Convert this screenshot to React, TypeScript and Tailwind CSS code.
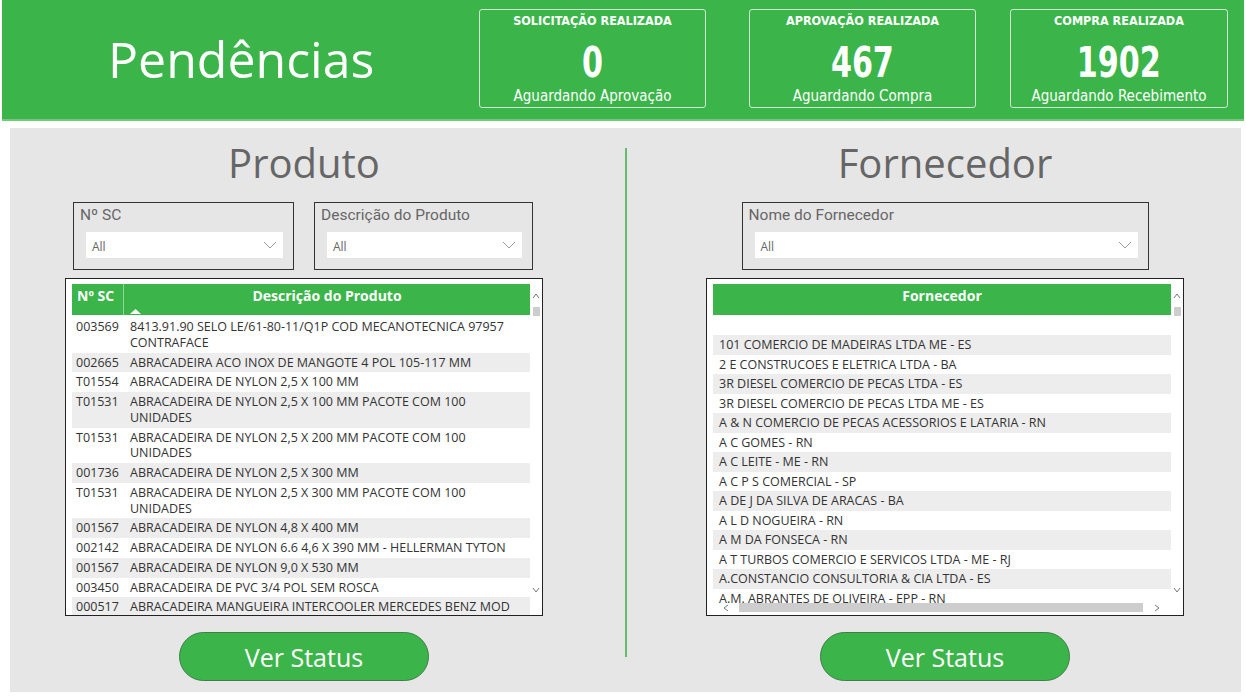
import React from 'react';

const kpis = [
  { title: 'SOLICITAÇÃO REALIZADA', value: '0', sub: 'Aguardando Aprovação', w: 'w-[227px]', ml: 'ml-0' },
  { title: 'APROVAÇÃO REALIZADA', value: '467', sub: 'Aguardando Compra', w: 'w-[227px]', ml: 'ml-[43px]' },
  { title: 'COMPRA REALIZADA', value: '1902', sub: 'Aguardando Recebimento', w: 'w-[218px]', ml: 'ml-[34px]' },
];

const produtos: { sc: string; desc: string[] }[] = [
  { sc: '003569', desc: ['8413.91.90 SELO LE/61-80-11/Q1P COD MECANOTECNICA 97957', 'CONTRAFACE'] },
  { sc: '002665', desc: ['ABRACADEIRA ACO INOX DE MANGOTE 4 POL 105-117 MM'] },
  { sc: 'T01554', desc: ['ABRACADEIRA DE NYLON 2,5 X 100 MM'] },
  { sc: 'T01531', desc: ['ABRACADEIRA DE NYLON 2,5 X 100 MM PACOTE COM 100', 'UNIDADES'] },
  { sc: 'T01531', desc: ['ABRACADEIRA DE NYLON 2,5 X 200 MM PACOTE COM 100', 'UNIDADES'] },
  { sc: '001736', desc: ['ABRACADEIRA DE NYLON 2,5 X 300 MM'] },
  { sc: 'T01531', desc: ['ABRACADEIRA DE NYLON 2,5 X 300 MM PACOTE COM 100', 'UNIDADES'] },
  { sc: '001567', desc: ['ABRACADEIRA DE NYLON 4,8 X 400 MM'] },
  { sc: '002142', desc: ['ABRACADEIRA DE NYLON 6.6 4,6 X 390 MM - HELLERMAN TYTON'] },
  { sc: '001567', desc: ['ABRACADEIRA DE NYLON 9,0 X 530 MM'] },
  { sc: '003450', desc: ['ABRACADEIRA DE PVC 3/4 POL SEM ROSCA'] },
  { sc: '000517', desc: ['ABRACADEIRA MANGUEIRA INTERCOOLER MERCEDES BENZ MOD'] },
];

const fornecedores = [
  '101 COMERCIO DE MADEIRAS LTDA ME - ES',
  '2 E CONSTRUCOES E ELETRICA LTDA - BA',
  '3R DIESEL COMERCIO DE PECAS LTDA - ES',
  '3R DIESEL COMERCIO DE PECAS LTDA ME - ES',
  'A & N COMERCIO DE PECAS ACESSORIOS E LATARIA - RN',
  'A C GOMES - RN',
  'A C LEITE - ME - RN',
  'A C P S COMERCIAL - SP',
  'A DE J DA SILVA DE ARACAS - BA',
  'A L D NOGUEIRA - RN',
  'A M DA FONSECA - RN',
  'A T TURBOS COMERCIO E SERVICOS LTDA - ME - RJ',
  'A.CONSTANCIO CONSULTORIA & CIA LTDA - ES',
  'A.M. ABRANTES DE OLIVEIRA - EPP - RN',
];

const Chevron = () => (
  <svg width="14" height="8" viewBox="0 0 14 8" fill="none">
    <polyline points="1,1 7,7 13,1" stroke="#9a9a9a" strokeWidth="1" />
  </svg>
);

const TinyArrow = ({ dir }: { dir: 'up' | 'down' | 'left' | 'right' }) => {
  const pts = {
    up: '1,5 4,1 7,5',
    down: '1,1 4,5 7,1',
    left: '5,1 1,4 5,7',
    right: '1,1 5,4 1,7',
  }[dir];
  const wide = dir === 'up' || dir === 'down';
  return (
    <svg width={wide ? 8 : 6} height={wide ? 6 : 8} viewBox={wide ? '0 0 8 6' : '0 0 6 8'} fill="none">
      <polyline points={pts} stroke="#777" strokeWidth="1" />
    </svg>
  );
};

const Slicer = ({ label, width }: { label: string; width: string }) => (
  <div className={`${width} h-[68px] border border-[#333] flex flex-col`}>
    <div className="pl-[6px] pt-[2px] h-[28px] text-[15.5px] leading-[20px] text-[#666] font-['Roboto',sans-serif]">
      {label}
    </div>
    <div className="ml-[12px] mr-[10px] mt-[1px] h-[26px] bg-white flex items-center justify-between pl-[6px] pr-[6px]">
      <span className="text-[12px] text-[#666] font-['Open_Sans',sans-serif] pt-[3px]">All</span>
      <Chevron />
    </div>
  </div>
);

const VScroll = () => (
  <div className="w-[12px] flex flex-col items-center">
    <div className="mt-[9px]"><TinyArrow dir="up" /></div>
    <div className="mt-[8px] w-[7px] h-[9px] bg-[#cdcdcd]" />
    <div className="flex-1" />
    <div className="mb-[22px]"><TinyArrow dir="down" /></div>
  </div>
);

const VerStatus = () => (
  <button className="w-[250px] h-[49px] rounded-full bg-[#3bb54a] border border-[#3f7d47] text-white text-[25px] leading-[30px] font-['Open_Sans',sans-serif] self-center">
    Ver Status
  </button>
);

const ProdutoTable = () => (
  <div className="w-[478px] h-[338px] border border-[#222] bg-white pl-[6px] pt-[5px] flex">
    <div className="flex-1 flex flex-col overflow-hidden">
      <div className="h-[31px] shrink-0 bg-[#3bb54a] flex text-white font-bold text-[14px] font-['Open_Sans',sans-serif]">
        <div className="w-[52px] border-r border-[#8fd497] pl-[5px] pt-[3px] leading-[18px]">Nº SC</div>
        <div className="flex-1 flex flex-col">
          <div className="text-center pt-[3px] leading-[18px]">Descrição do Produto</div>
          <svg className="ml-[6px] mt-[4px]" width="11" height="5" viewBox="0 0 11 5">
            <polygon points="0,5 5.5,0 11,5" fill="#fff" />
          </svg>
        </div>
      </div>
      <div className="flex-1 overflow-hidden pt-[2px] text-[12.5px] text-[#333] font-['Open_Sans',sans-serif]">
        {produtos.map((p, i) => (
          <div
            key={i}
            className={`flex py-[2px] leading-[15.75px] ${i % 2 === 0 ? 'bg-white' : 'bg-[#ededed]'}`}
          >
            <div className="w-[52px] pl-[4px] whitespace-nowrap">{p.sc}</div>
            <div className="flex-1 pl-[6px] whitespace-nowrap">
              {p.desc.map((l, j) => (
                <div key={j}>{l}</div>
              ))}
            </div>
          </div>
        ))}
      </div>
    </div>
    <VScroll />
  </div>
);

const FornecedorTable = () => (
  <div className="w-[478px] h-[338px] border border-[#222] bg-white pl-[6px] pt-[5px] flex">
    <div className="flex-1 flex flex-col overflow-hidden relative">
      <div className="h-[31px] shrink-0 bg-[#3bb54a] text-white font-bold text-[14px] font-['Open_Sans',sans-serif] text-center pt-[3px] leading-[18px]">
        Fornecedor
      </div>
      <div className="flex-1 overflow-hidden text-[12.5px] text-[#333] font-['Open_Sans',sans-serif]">
        <div className="h-[20px] bg-white" />
        {fornecedores.map((f, i) => (
          <div
            key={i}
            className={`h-[19.5px] pl-[6px] leading-[19.5px] whitespace-nowrap ${i % 2 === 0 ? 'bg-[#ededed]' : 'bg-white'}`}
          >
            {f}
          </div>
        ))}
      </div>
      {/* horizontal scrollbar */}
      <div className="absolute left-0 right-0 bottom-[3px] h-[9px] flex items-center">
        <div className="w-[26px] flex justify-center"><TinyArrow dir="left" /></div>
        <div className="w-[404px] h-[9px] bg-[#cdcdcd]" />
        <div className="flex-1 flex justify-center"><TinyArrow dir="right" /></div>
      </div>
    </div>
    <VScroll />
  </div>
);

export default function App() {
  return (
    <div className="w-[1246px] h-[698px] bg-white overflow-hidden">
      {/* Header */}
      <div className="ml-[2px] w-[1242px] h-[121px] bg-[#3bb54a] border-b-2 border-[#72c87c] flex items-start">
        <div className="w-[477px] pl-[106px] mt-[24px] text-white text-[50px] leading-[70px] font-['Open_Sans',sans-serif]">
          Pendências
        </div>
        {kpis.map((k, i) => (
          <div
            key={i}
            className={`${k.w} ${k.ml} mt-[9px] h-[99px] border border-[#cfeed3] rounded-[3px] flex flex-col items-center text-white font-['DejaVu_Sans_Condensed','DejaVu_Sans',sans-serif] [font-stretch:condensed]`}
          >
            <div className="pt-[3px] text-[12.5px] leading-[16px] font-bold">{k.title}</div>
            <div className="mt-[12px] text-[43px] leading-[42px] font-bold scale-x-[0.78]">{k.value}</div>
            <div className="mt-[4px] text-[15px] leading-[18px]">{k.sub}</div>
          </div>
        ))}
      </div>

      {/* Body panel */}
      <div className="mt-[7px] ml-[10px] w-[1231px] h-[564px] bg-[#e6e6e6] flex">
        {/* Produto */}
        <div className="w-[615px] pl-[55px] pt-[11px]">
          <div className="w-[478px] flex flex-col">
            <div className="h-[48px] text-center text-[40px] leading-[48px] text-[#666] font-['Open_Sans',sans-serif]">
              Produto
            </div>
            <div className="mt-[15px] flex gap-[20px] pl-[8px]">
              <Slicer label="Nº SC" width="w-[221px]" />
              <Slicer label="Descrição do Produto" width="w-[219px]" />
            </div>
            <div className="mt-[8px]">
              <ProdutoTable />
            </div>
            <div className="mt-[16px] flex justify-center">
              <VerStatus />
            </div>
          </div>
        </div>

        <div className="w-[2px] h-[509px] mt-[20px] bg-[#63bd6a]" />

        {/* Fornecedor */}
        <div className="flex-1 pl-[79px] pt-[11px]">
          <div className="w-[478px] flex flex-col">
            <div className="h-[48px] text-center text-[40px] leading-[48px] text-[#666] font-['Open_Sans',sans-serif]">
              Fornecedor
            </div>
            <div className="mt-[15px] flex justify-center">
              <Slicer label="Nome do Fornecedor" width="w-[407px]" />
            </div>
            <div className="mt-[8px]">
              <FornecedorTable />
            </div>
            <div className="mt-[16px] flex justify-center">
              <VerStatus />
            </div>
          </div>
        </div>
      </div>
    </div>
  );
}
